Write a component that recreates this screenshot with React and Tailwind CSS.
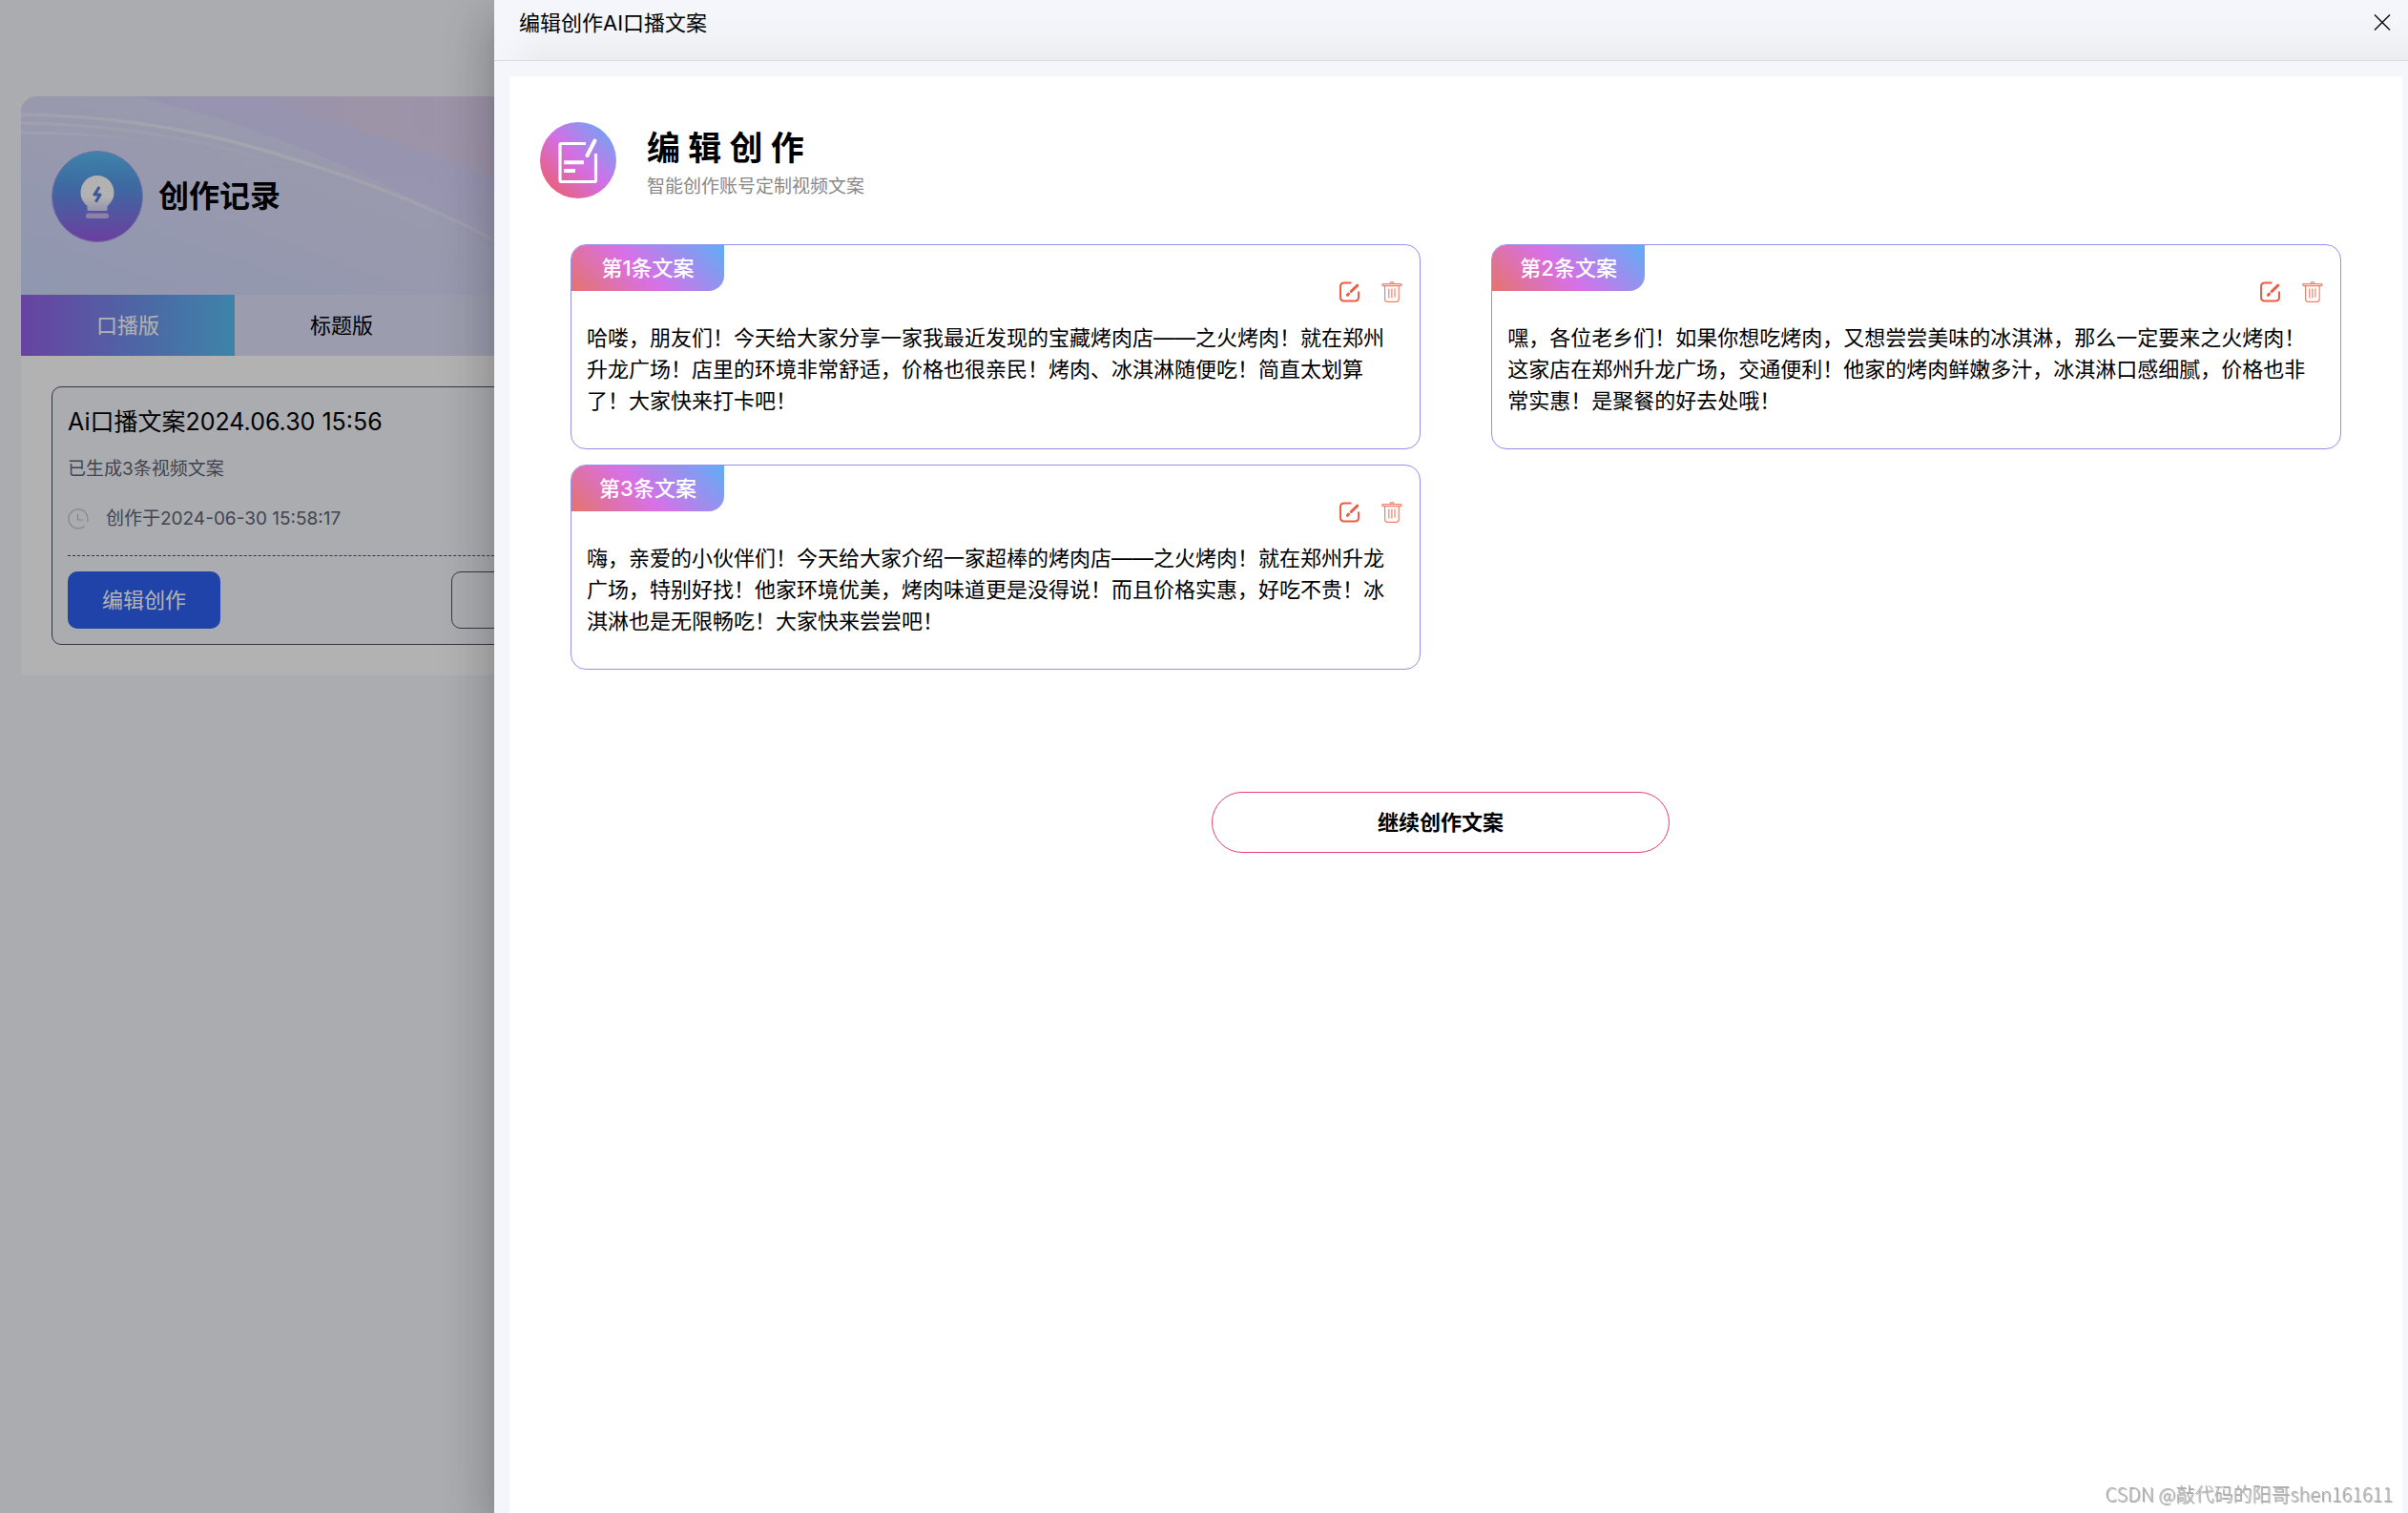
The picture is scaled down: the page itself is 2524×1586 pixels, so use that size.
import React, { useState } from 'react';

const initialCopies = [
  '哈喽，朋友们！今天给大家分享一家我最近发现的宝藏烤肉店——之火烤肉！就在郑州升龙广场！店里的环境非常舒适，价格也很亲民！烤肉、冰淇淋随便吃！简直太划算了！大家快来打卡吧！',
  '嘿，各位老乡们！如果你想吃烤肉，又想尝尝美味的冰淇淋，那么一定要来之火烤肉！这家店在郑州升龙广场，交通便利！他家的烤肉鲜嫩多汁，冰淇淋口感细腻，价格也非常实惠！是聚餐的好去处哦！',
  '嗨，亲爱的小伙伴们！今天给大家介绍一家超棒的烤肉店——之火烤肉！就在郑州升龙广场，特别好找！他家环境优美，烤肉味道更是没得说！而且价格实惠，好吃不贵！冰淇淋也是无限畅吃！大家快来尝尝吧！',
];

const BulbIcon = () => (
  <svg viewBox="0 0 96 96" className="w-24 h-24 shrink-0" aria-hidden="true">
    <defs>
      <linearGradient id="bulbBg" x1="0" y1="0" x2="0" y2="1">
        <stop offset="0" stopColor="#58bdf2" />
        <stop offset="0.4" stopColor="#5a96e8" />
        <stop offset="1" stopColor="#9a5ae4" />
      </linearGradient>
      <linearGradient id="bulbFill" x1="0" y1="0" x2="0" y2="1">
        <stop offset="0.6" stopColor="#ffffff" />
        <stop offset="1" stopColor="#d6d2f6" />
      </linearGradient>
    </defs>
    <circle cx="48" cy="48" r="47.500" fill="url(#bulbBg)" stroke="#a7a0ec" strokeWidth="1" />
    <path
      d="M48 26c-10 0-17.500 8-17.500 18 0 6 3 10.500 7 14v3.500q0 1.500 1.500 1.500h18q1.500 0 1.500-1.500V58c4-3.500 7-8 7-14 0-10-7.500-18-17.500-18z"
      fill="url(#bulbFill)"
    />
    <path d="M49.500 39l-4.500 7h6l-4 6.500" fill="none" stroke="#5a7fdc" strokeWidth="3.200" strokeLinecap="round" strokeLinejoin="round" />
    <rect x="36" y="65.500" width="24" height="5.500" rx="2.500" fill="#cbb9ef" />
  </svg>
);

const BannerArt = () => (
  <svg viewBox="0 0 660 208" preserveAspectRatio="none" className="absolute inset-0 w-full h-full" aria-hidden="true">
    <defs>
      <linearGradient id="bandFade" x1="0.4" y1="0.1" x2="0.15" y2="0.9">
        <stop offset="0" stopColor="#d6cffc" />
        <stop offset="1" stopColor="#d6cffc" stopOpacity="0" />
      </linearGradient>
      <linearGradient id="pinkFade" x1="0" y1="0" x2="1" y2="0">
        <stop offset="0" stopColor="#e5d4ee" stopOpacity="0.1" />
        <stop offset="0.3" stopColor="#e5d4ee" />
        <stop offset="1" stopColor="#dfd3f2" />
      </linearGradient>
      <linearGradient id="arcFade" x1="0" y1="0" x2="1" y2="0">
        <stop offset="0" stopColor="#efeefa" stopOpacity="0.6" />
        <stop offset="0.4" stopColor="#efeefa" stopOpacity="0.9" />
        <stop offset="0.85" stopColor="#efeefa" stopOpacity="0.4" />
        <stop offset="1" stopColor="#efeefa" stopOpacity="0" />
      </linearGradient>
      <linearGradient id="arcTail" x1="0" y1="0" x2="1" y2="0">
        <stop offset="0" stopColor="#efeefa" stopOpacity="0.6" />
        <stop offset="1" stopColor="#efeefa" stopOpacity="0" />
      </linearGradient>
    </defs>
    <path d="M120 0H660V208H560C440 110 290 40 120 0z" fill="url(#bandFade)" opacity="0.7" />
    <path d="M230 0C320 22 420 55 500 88C560 115 610 145 660 180V0z" fill="url(#pinkFade)" opacity="0.8" />
    <path d="M0 19C90 20 170 32 253 56C340 82 420 110 494 150C560 186 580 200 590 208" fill="none" stroke="url(#arcFade)" strokeWidth="3.500" />
    <path d="M0 28C110 30 210 46 330 90" fill="none" stroke="url(#arcTail)" strokeWidth="3" />
    <path d="M0 38C60 38 110 42 160 52" fill="none" stroke="url(#arcTail)" strokeWidth="3" />
  </svg>
);

const ClockIcon = () => (
  <svg viewBox="0 0 22 22" className="w-[22px] h-[22px]" fill="none" stroke="#bfc0c4" strokeWidth="1.200" aria-hidden="true">
    <path d="M17.500 18.500A10 10 0 1 1 20.500 14" />
    <path d="M10.500 5.500V12H16" />
  </svg>
);

const DocIcon = () => (
  <svg viewBox="0 0 80 80" className="w-20 h-20 shrink-0" aria-hidden="true">
    <defs>
      <linearGradient id="docBg" x1="0.1" y1="0.9" x2="0.9" y2="0.1">
        <stop offset="0" stopColor="#ea5f74" />
        <stop offset="0.5" stopColor="#d36fe4" />
        <stop offset="1" stopColor="#74a3f4" />
      </linearGradient>
    </defs>
    <circle cx="40" cy="40" r="40" fill="url(#docBg)" />
    <path d="M48 22.500H22.500q-1.500 0-1.500 1.500V61q0 1.500 1.500 1.500H57q1.500 0 1.500-1.500V33" fill="none" stroke="#fff" strokeWidth="3.200" />
    <path d="M57.500 19.500L49.500 35" stroke="#fff" strokeWidth="4" strokeLinecap="round" />
    <path d="M25 42.300H46M25 51H37" stroke="#fff" strokeWidth="4" />
  </svg>
);

const EditIcon = () => (
  <svg viewBox="0 0 22 22" className="w-[22px] h-[22px]" fill="none" stroke="#ee5c44" aria-hidden="true">
    <path d="M12.500 1.500H5Q1 1.500 1 5.500V16.500Q1 20.500 5 20.500H16Q20 20.500 20 16.500V10.500" strokeWidth="2" />
    <path d="M18.800 4.200L12.200 10.500" strokeWidth="3" strokeLinecap="round" />
    <path d="M9.600 13L8.400 14.300" strokeWidth="3" strokeLinecap="round" />
  </svg>
);

const TrashIcon = () => (
  <svg viewBox="0 0 22 22" className="w-[22px] h-[22px]" fill="none" stroke="#f0806c" strokeWidth="1.200" aria-hidden="true">
    <path d="M9 2.500Q9 0.700 10.900 0.700Q12.800 0.700 12.800 2.500" />
    <rect x="0.700" y="2.600" width="20.300" height="2" rx="1" />
    <path d="M3.600 5V18.500Q3.600 21.300 6.400 21.300H15.400Q18.200 21.300 18.200 18.500V5" />
    <path d="M7.800 7.500V17.500M10.900 7.500V17.500M14 7.500V16.500" />
  </svg>
);

const CopyCard = ({ index, text, onDelete }) => (
  <article className="w-[48%] bg-white border border-[#9391ee] rounded-2xl overflow-hidden">
    <div className="flex justify-between h-[60px] pr-[18px]">
      <h3 className="w-40 h-12 flex items-center justify-center rounded-br-2xl bg-[linear-gradient(45deg,#e4746a_0%,#d870e6_45%,#5eaef6_100%)] text-white text-[22px] font-medium">
        第{index + 1}条文案
      </h3>
      <div className="flex items-end gap-[22px]">
        <button type="button" aria-label="编辑"><EditIcon /></button>
        <button type="button" aria-label="删除" onClick={onDelete}><TrashIcon /></button>
      </div>
    </div>
    <p className="mt-[21px] pl-4 pr-7 pb-[33px] text-[22px] leading-[33px]">{text}</p>
  </article>
);

const RecordPage = () => (
  <main className="pt-[101px] pl-[22px]">
    <div className="w-[660px] bg-white rounded-t-2xl overflow-hidden">
      {/* Banner */}
      <div className="relative h-52 bg-[linear-gradient(20deg,#cdd9fc_0%,#dbdbfa_45%,#dedffc_100%)]">
        <BannerArt />
        <div className="relative h-full flex items-center gap-4 pt-0.5 pl-8">
          <BulbIcon />
          <h1 className="text-[32px] font-bold">创作记录</h1>
        </div>
      </div>

      {/* Tabs */}
      <div className="flex h-16 bg-[#dee0f8] text-[22px]">
        <button type="button" className="w-56 text-white bg-[linear-gradient(90deg,#9660e8_0%,#6f93ec_55%,#58bdf2_100%)]">口播版</button>
        <button type="button" className="w-56">标题版</button>
      </div>

      {/* Record */}
      <div className="p-8">
        <div className="border border-[#4a4f5c] rounded-[10px] bg-[#f4f6fb] p-4">
          <h2 className="mt-1 text-[25px] leading-8">Ai口播文案2024.06.30 15:56</h2>
          <p className="mt-[18px] text-[19px] leading-8 text-[#5c6474]">已生成3条视频文案</p>
          <div className="mt-5 flex items-center gap-[18px] text-[19px] leading-8 text-[#5c6474]">
            <ClockIcon />
            <span>创作于2024-06-30 15:58:17</span>
          </div>
          <div className="mt-[22px] border-t border-dashed border-[#4a4f5c]" />
          <div className="mt-4 flex justify-between">
            <button type="button" className="w-40 h-[60px] rounded-[10px] bg-[#2f61f4] text-white text-[22px]">编辑创作</button>
            <button type="button" aria-label="删除记录" className="w-40 h-[60px] rounded-[10px] border border-[#4a4f5c]" />
          </div>
        </div>
      </div>
    </div>
  </main>
);

const App = () => {
  const [copies, setCopies] = useState(initialCopies);

  const removeCopy = (text) => {
    setCopies(prev => prev.filter(item => item !== text));
  };

  return (
    <div lang="zh-CN" className="min-h-screen bg-[#f4f6fb] text-black font-['Inter','Noto_Sans_CJK_SC',sans-serif]">
      <RecordPage />

      {/* Mask */}
      <div className="fixed inset-0 bg-black/30" />

      {/* Drawer */}
      <aside className="fixed inset-y-0 right-0 left-[518px] flex flex-col bg-[#f4f6fb] shadow-[0_16px_20px_-10px_rgba(0,0,0,0.2),0_32px_48px_4px_rgba(0,0,0,0.14),0_12px_60px_10px_rgba(0,0,0,0.12)]">
        <header className="h-16 shrink-0 flex items-start justify-between pt-2 pl-[26px] pr-[18px] border-b border-[#dadbdf] bg-[linear-gradient(to_right,#f4f6fb,transparent_50px),linear-gradient(to_bottom,#f4f6fb_30%,#f0f1f5_75%,#ebecf0)]">
          <h2 className="text-[22px] leading-8">编辑创作AI口播文案</h2>
          <button type="button" aria-label="关闭" className="h-8 flex items-center">
            <svg viewBox="0 0 18 18" className="w-[18px] h-[18px]" stroke="#111" strokeWidth="1.500" aria-hidden="true">
              <path d="M1 0.500L17 16.500M17 0.500L1 16.500" />
            </svg>
          </button>
        </header>

        <section className="flex-1 mt-4 ml-4 mr-1.5 pt-12 pl-8 pr-16 bg-white">
          <div className="flex gap-8">
            <DocIcon />
            <div className="pt-1">
              <h1 className="text-[35px] leading-[46px] font-bold">编 辑 创 作</h1>
              <p className="text-[19px] leading-9 text-[#888]">智能创作账号定制视频文案</p>
            </div>
          </div>

          <div className="mt-[42px] pl-8 flex flex-wrap justify-between gap-y-4">
            {copies.map((text, index) => (
              <CopyCard key={text} index={index} text={text} onDelete={() => removeCopy(text)} />
            ))}
          </div>

          <div className="mt-32 flex justify-center">
            <button type="button" className="w-[480px] h-16 rounded-full border border-[#e83e72] text-[22px] font-bold">继续创作文案</button>
          </div>
        </section>
      </aside>

      <div className="fixed right-4 bottom-1 text-xl leading-8 font-['Noto_Sans_CJK_SC',sans-serif] font-light text-[#b4b4b4] [text-shadow:1px_1px_1px_rgba(0,0,0,0.4)]">
        CSDN @敲代码的阳哥shen161611
      </div>
    </div>
  );
};

export default App;
